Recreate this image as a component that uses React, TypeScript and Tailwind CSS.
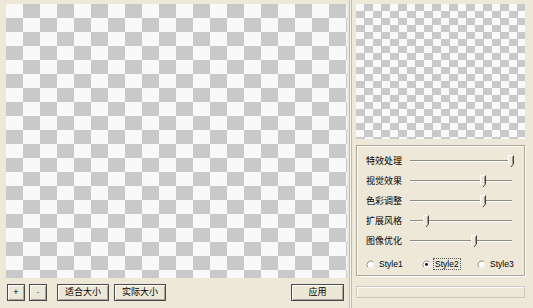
import React from "react";

const checker =
    "bg-[conic-gradient(#c9c9c9_25%,#f9f9f9_0_50%,#c9c9c9_0_75%,#f9f9f9_0)]";

const sliders = [
    { label: "特效处理", pos: 101 },
    { label: "视觉效果", pos: 73 },
    { label: "色彩调整", pos: 73 },
    { label: "扩展风格", pos: 16 },
    { label: "图像优化", pos: 64 },
];

const radios = [
    { label: "Style1", checked: false, w: "w-[56px]" },
    { label: "Style2", checked: true, w: "w-[55px]" },
    { label: "Style3", checked: false, w: "w-[36px]" },
];

const font = { fontFamily: '"Liberation Sans", "Noto Sans CJK SC", sans-serif' };

function Btn({ children, className }: { children: React.ReactNode; className?: string }) {
    return (
        <button
            className={
                "flex h-[17px] items-center justify-center border border-[#4a4a4a] bg-[#ece8d8] text-[9px] leading-none text-black shadow-[inset_1px_1px_0_#ffffff,inset_-1px_-1px_0_#a8a497] " +
                (className ?? "")
            }
        >
            {children}
        </button>
    );
}

function Thumb() {
    return (
        <svg width="7" height="13" viewBox="0 0 7 13" className="block">
            <polygon points="0.5,0.5 5.5,0.5 5.5,9 3,12 0.5,9.5" fill="#ece8d8" />
            <path d="M0.5 9.5 V0.5 H5.5" stroke="#ffffff" fill="none" />
            <path d="M5.5 0.5 V9 L3 12" stroke="#404040" fill="none" />
            <path d="M4.5 1.5 V8.5" stroke="#9d9a8e" fill="none" />
        </svg>
    );
}

function Radio({ checked }: { checked: boolean }) {
    return (
        <svg width="9" height="9" viewBox="0 0 9 9" className="block shrink-0">
            <circle cx="4.5" cy="4.5" r="4" fill="#ffffff" />
            <path d="M1.7 7.3 A4 4 0 0 1 7.3 1.7" stroke="#8a877c" fill="none" />
            <path d="M7.3 1.7 A4 4 0 0 1 1.7 7.3" stroke="#e6e2d4" fill="none" />
            {checked && <circle cx="4.5" cy="4.5" r="1.4" fill="#000000" />}
        </svg>
    );
}

export default function App() {
    return (
        <div className="flex h-[308px] w-[533px] bg-[#ede8d8] text-black" style={font}>
            {/* left: canvas + toolbar */}
            <div className="flex w-[347px] flex-col pl-[6px] pt-[4px]">
                <div className={`h-[274px] w-[341px] ${checker} bg-[length:34px_28px]`} />
                <div className="mt-[6px] flex pl-[1px]">
                    <Btn className="w-[18px]">+</Btn>
                    <Btn className="ml-[4px] w-[18px]">·</Btn>
                    <Btn className="ml-[10px] w-[52px]">适合大小</Btn>
                    <Btn className="ml-[5px] w-[52px]">实际大小</Btn>
                    <Btn className="ml-auto mr-[3px] w-[53px]">应用</Btn>
                </div>
            </div>

            {/* splitter */}
            <div className="ml-[2px] flex h-full">
                <div className="w-px bg-[#c7b7b3]" />
                <div className="w-px bg-[#f8f6ee]" />
                <div className="w-px bg-[#c7b7b3]" />
            </div>

            {/* right: preview + settings */}
            <div className="ml-[4px] flex w-[169px] flex-col pt-[4px]">
                <div className={`h-[135px] w-full ${checker} bg-[length:17px_14px]`} />

                <div className="mt-[6px] h-[131px] border border-[#aaa596] px-[9px] pt-[5px] shadow-[inset_1px_1px_0_#ffffff,1px_1px_0_#ffffff]">
                    {sliders.map((s) => (
                        <div key={s.label} className="flex h-[20px] items-center">
                            <span className="w-[44px] text-[9px] leading-none">{s.label}</span>
                            <div className="relative h-[12px] w-[102px]">
                                <div className="absolute left-0 right-0 top-[5px] h-[2px] border-t border-[#8e8b80] border-b border-b-[#ffffff]" />
                                <div className="absolute top-0" style={{ left: s.pos - 3 }}>
                                    <Thumb />
                                </div>
                            </div>
                        </div>
                    ))}
                    <div className="mt-[5px] flex h-[16px] items-center">
                        {radios.map((r) => (
                            <div key={r.label} className={`flex shrink-0 items-center ${r.w}`}>
                                <Radio checked={r.checked} />
                                <span
                                    className={
                                        "ml-[2px] whitespace-nowrap text-[8.5px] leading-none " +
                                        (r.checked ? "border border-dotted border-[#555] px-px py-px" : "px-[2px]")
                                    }
                                >
                                    {r.label}
                                </span>
                            </div>
                        ))}
                    </div>
                </div>

                <div className="mt-[10px] h-[12px] border border-[#cfc5bd] shadow-[inset_1px_1px_0_#ffffff]" />
            </div>
        </div>
    );
}
